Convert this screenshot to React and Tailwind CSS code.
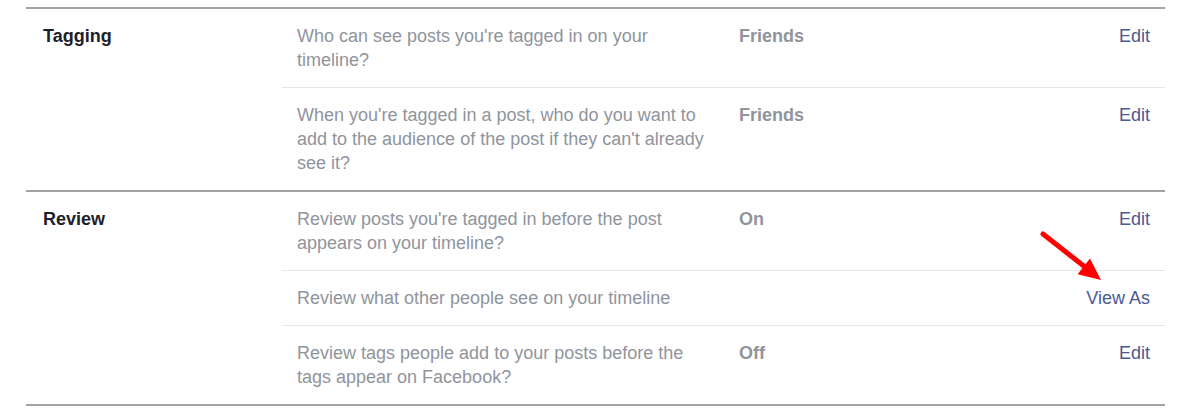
const sections = [
  {
    label: 'Tagging',
    rows: [
      { text: ["Who can see posts you're tagged in on your", 'timeline?'], value: 'Friends', action: 'Edit' },
      {
        text: [
          "When you're tagged in a post, who do you want to",
          "add to the audience of the post if they can't already",
          'see it?',
        ],
        value: 'Friends',
        action: 'Edit',
      },
    ],
  },
  {
    label: 'Review',
    rows: [
      { text: ["Review posts you're tagged in before the post", 'appears on your timeline?'], value: 'On', action: 'Edit' },
      { text: ['Review what other people see on your timeline'], value: '', action: 'View As', arrow: true },
      { text: ['Review tags people add to your posts before the', 'tags appear on Facebook?'], value: 'Off', action: 'Edit' },
    ],
  },
];

function Arrow() {
  return (
    <svg className="absolute left-[-50px] top-[-60px]" width="72" height="60" viewBox="0 0 72 60">
      <line x1="7" y1="6" x2="49" y2="39" stroke="#ff0000" strokeWidth="5" strokeLinecap="round" />
      <polygon points="65,52 41.6,46.2 54,30.6" fill="#ff0000" />
    </svg>
  );
}

export default function App() {
  return (
    <div className="w-[1190px] h-[410px] bg-white pt-[7px] pl-[26px]" style={{ fontFamily: '"Liberation Sans", Arial, sans-serif' }}>
      <div className="w-[1139px] border-t-2 border-[#a3a3a3]">
        {sections.map((s) => (
          <div key={s.label} className="flex border-b-2 border-[#a3a3a3]">
            <div className="w-[256px] shrink-0 pl-[17px] pt-[15px] text-[18px] leading-[24px] font-bold text-[#1d2129]">
              {s.label}
            </div>
            <div className="flex-1">
              {s.rows.map((r, i) => (
                <div
                  key={i}
                  className={`flex py-[15px] text-[18px] leading-[24px] ${i > 0 ? 'border-t border-[#e6e6e6]' : ''}`}
                >
                  <div className="w-[457px] shrink-0 pl-[15px] text-[#90949c]">
                    {r.text.map((t, j) => (
                      <div key={j}>{t}</div>
                    ))}
                  </div>
                  <div className="flex-1 font-bold text-[#90949c]">{r.value}</div>
                  <div className="pr-[15px] text-[#4b5a8f]">
                    <span className="relative">
                      {r.arrow && <Arrow />}
                      {r.action}
                    </span>
                  </div>
                </div>
              ))}
            </div>
          </div>
        ))}
      </div>
    </div>
  );
}
